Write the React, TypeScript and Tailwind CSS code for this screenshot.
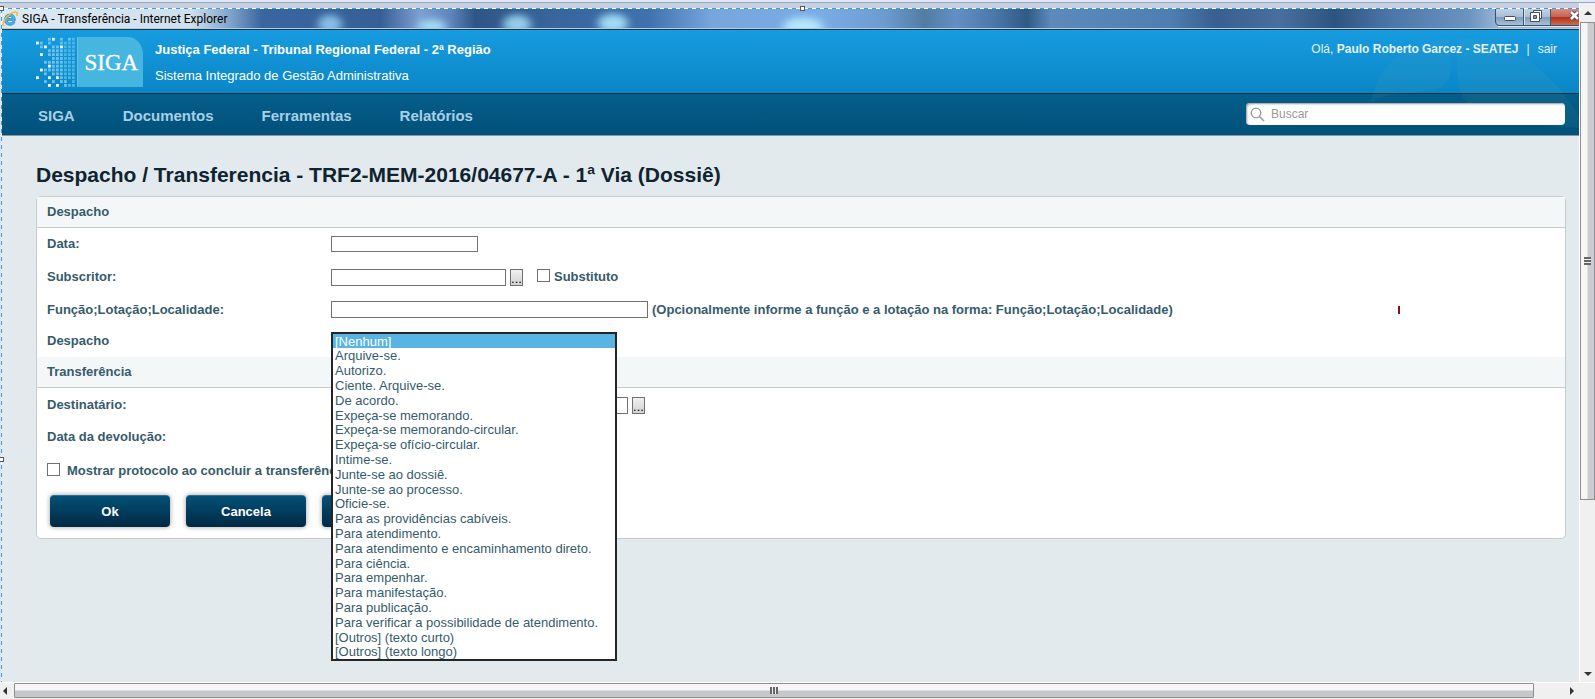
import React from "react";

const DISPATCHES = [
  "[Nenhum]",
  "Arquive-se.",
  "Autorizo.",
  "Ciente. Arquive-se.",
  "De acordo.",
  "Expeça-se memorando.",
  "Expeça-se memorando-circular.",
  "Expeça-se ofício-circular.",
  "Intime-se.",
  "Junte-se ao dossiê.",
  "Junte-se ao processo.",
  "Oficie-se.",
  "Para as providências cabíveis.",
  "Para atendimento.",
  "Para atendimento e encaminhamento direto.",
  "Para ciência.",
  "Para empenhar.",
  "Para manifestação.",
  "Para publicação.",
  "Para verificar a possibilidade de atendimento.",
  "[Outros] (texto curto)",
  "[Outros] (texto longo)",
];

// W = bright dot, L = light dot, o = faint dot
const LOGO_DOTS = [
  "...LW.L.Lo",
  "WL.L..Looo",
  ".LW.LLWooo",
  "...LLLLooo",
  ".W.LLLLooo",
  "....LLLooo",
  "..LLLLLooo",
  "...WLLLooo",
  ".WLLLLLooo",
  "..L.LLLooo",
  "W..W.WLooo",
  "..L.L.LL.o",
  "...W.W.Loo",
];

const DOT_FILL: Record<string, string> = { W: "#ffffff", L: "#6cc2ea", o: "#4db6e3" };

function Logo() {
  return (
    <svg width="107" height="50" viewBox="0 0 107 50" role="img" aria-label="SIGA" className="shrink-0">
      {LOGO_DOTS.flatMap((row, r) =>
        [...row].map((c, i) =>
          c === "." ? null : (
            <rect key={`${r}-${i}`} x={i * 4} y={0.8 + r * 3.85} width="2.8" height="2.8" fill={DOT_FILL[c]} />
          ),
        ),
      )}
      <path d="M41 0H93C101 1 106 7 107 16V50H41Z" fill="#46b5e0" />
      <path d="M41.5 50V.5" stroke="#62c1e6" />
      <text x="48.5" y="33" fill="#fff" stroke="#fff" strokeWidth=".3" fontSize="23" fontFamily="Liberation Serif, serif">
        SIGA
      </text>
    </svg>
  );
}

function Aero() {
  return (
    <svg className="absolute inset-0 h-full w-full" viewBox="0 0 1577 21" preserveAspectRatio="none" aria-hidden="true">
      <defs>
        <linearGradient id="aero">
          <stop offset="0" stopColor="#dde9f2" />
          <stop offset=".12" stopColor="#cfdfec" />
          <stop offset=".145" stopColor="#7fa3cb" />
          <stop offset=".165" stopColor="#3a659f" />
          <stop offset=".24" stopColor="#365f97" />
          <stop offset=".265" stopColor="#7d9fd2" />
          <stop offset=".285" stopColor="#5d84bb" />
          <stop offset=".3" stopColor="#2f5585" />
          <stop offset=".35" stopColor="#37659c" />
          <stop offset=".41" stopColor="#3f71ac" />
          <stop offset=".45" stopColor="#76a6dc" />
          <stop offset=".52" stopColor="#7aace4" />
          <stop offset=".56" stopColor="#6c9bd0" />
          <stop offset=".585" stopColor="#527ca3" />
          <stop offset=".605" stopColor="#6290c4" />
          <stop offset=".63" stopColor="#4a77a8" />
          <stop offset=".65" stopColor="#305a86" />
          <stop offset=".665" stopColor="#5b8abb" />
          <stop offset=".74" stopColor="#4f7fb2" />
          <stop offset=".77" stopColor="#375f8f" />
          <stop offset=".81" stopColor="#48709f" />
          <stop offset=".845" stopColor="#2d5480" />
          <stop offset=".88" stopColor="#4a76a8" />
          <stop offset=".93" stopColor="#6a93c0" />
          <stop offset=".95" stopColor="#9ab8d6" />
          <stop offset="1" stopColor="#9ab8d6" />
        </linearGradient>
        <filter id="soft" x="-50%" y="-50%" width="200%" height="200%">
          <feGaussianBlur stdDeviation="4" />
        </filter>
      </defs>
      <rect width="1577" height="21" fill="url(#aero)" />
      <g filter="url(#soft)" fill="#a4dcf5">
        <ellipse cx="328" cy="16" rx="12" ry="10" fill="#86bfe6" />
        <ellipse cx="430" cy="18" rx="14" ry="7" />
        <ellipse cx="515" cy="16" rx="14" ry="10" fill="#93cdea" />
        <ellipse cx="611" cy="15" rx="15" ry="10" fill="#9fdaf5" />
        <ellipse cx="801" cy="19" rx="20" ry="10" fill="#b4e6ff" />
      </g>
    </svg>
  );
}

function IeIcon() {
  return (
    <svg width="16" height="16" viewBox="0 0 16 16" aria-hidden="true" className="shrink-0">
      <path
        d="M13.3 9.4H5.4C5.6 11 6.6 11.9 8 11.9c1 0 1.7-.4 2.1-1.1h3c-.8 2.2-2.6 3.5-5.1 3.5C4.7 14.3 2.4 12 2.4 8.8 2.4 5.5 4.7 3.1 8 3.1c3.4 0 5.5 2.5 5.3 6.3Z M5.5 7.5h4.9C10.2 6.2 9.3 5.4 8 5.4S5.8 6.2 5.5 7.5Z"
        fill="#4db4ea"
        stroke="#1f7fc4"
        strokeWidth=".7"
        fillRule="evenodd"
      />
      <path d="M2.6 14.6C.6 14.8.4 12.5 2.6 8.8 5.5 4 11.5.3 14.2 1.3c1.3.6 1.2 2 .4 3.6" fill="none" stroke="#f3bb2c" strokeWidth="1.5" />
    </svg>
  );
}

function WindowButtons() {
  return (
    <svg width="84" height="18" viewBox="0 0 84 18" aria-hidden="true" className="relative shrink-0">
      <defs>
        <linearGradient id="wb" x2="0" y2="1">
          <stop offset="0" stopColor="#c3d2e2" />
          <stop offset=".5" stopColor="#a9bfd6" />
          <stop offset=".52" stopColor="#7f9cbc" />
          <stop offset="1" stopColor="#a8c2da" />
        </linearGradient>
        <linearGradient id="wc" x2="0" y2="1">
          <stop offset="0" stopColor="#d88e80" />
          <stop offset=".5" stopColor="#c9604e" />
          <stop offset=".52" stopColor="#b0301c" />
          <stop offset="1" stopColor="#cf6a50" />
        </linearGradient>
      </defs>
      <path d="M1 0V12Q1 16 5 16H84V0Z" fill="url(#wb)" />
      <path d="M56 0H84V16H56Z" fill="url(#wc)" />
      <path d="M.5 0V12Q.5 16.5 5 16.5H84" fill="none" stroke="#3c4f66" />
      <path d="M3 17.5H84" stroke="#dbe8f3" />
      <path d="M28.5 0V16M55.5 0V16" stroke="#45566c" />
      <path d="M29.5 0V16" stroke="#d5e1ec" />
      <rect x="9.5" y="7.500" width="11" height="4" rx="1" fill="#fff" stroke="#464d5c" />
      <path d="M38.5 1.5h8v8h-8z" fill="#fff" stroke="#464d5c" />
      <path d="M35.5 3.5h9v9h-9z" fill="#fff" stroke="#464d5c" />
      <path d="M38.5 6.5h3v3h-3z" fill="#7f9cbc" stroke="#464d5c" />
      <path d="M76 3l7 7M83 3l-7 7" stroke="#464d5c" strokeWidth="4.5" />
      <path d="M76 3l7 7M83 3l-7 7" stroke="#fff" strokeWidth="2.5" />
    </svg>
  );
}

function Handle({ className }: { className: string }) {
  return <span className={`absolute z-10 h-[5px] w-[5px] border border-[#555] bg-white ${className}`} />;
}

const INPUT = "border border-[#707070] bg-white px-1 text-[13px] outline-none";
const BOX = "h-[13px] w-[13px] shrink-0 appearance-none border border-[#707070] bg-white";

function Row({ id, label, children, className }: { id: string; label: string; children: React.ReactNode; className: string }) {
  return (
    <div className={`flex items-center px-[10px] ${className}`}>
      <label htmlFor={id} className="w-[284px] shrink-0">
        {label}
      </label>
      {children}
    </div>
  );
}

function SectionTitle({ children }: { children: React.ReactNode }) {
  return <h2 className="flex h-[31px] items-center border-b border-[#c8cbcd] bg-[#f3f7f8] px-[10px]">{children}</h2>;
}

function Picker({ label }: { label: string }) {
  return (
    <button
      type="button"
      aria-label={label}
      className="ml-1 flex h-[17px] w-[13px] shrink-0 items-end justify-center overflow-hidden border border-[#707070] bg-linear-to-b from-[#f0f0f0] to-[#d2d2d2] text-[13px] leading-[13px] font-normal text-black"
    >
      ...
    </button>
  );
}

function ActionButton({ children }: { children: React.ReactNode }) {
  return (
    <button
      type="button"
      className="h-8 w-[120px] shrink-0 rounded-[4px] border-t border-[#2d6d8f] bg-linear-to-b from-[#035078] to-[#012a43] text-[13px] font-bold text-white shadow-[0_0_4px_1px_#bbb]"
    >
      {children}
    </button>
  );
}

function Arrow({ d }: { d: string }) {
  return (
    <svg width="8" height="8" viewBox="0 0 8 8" aria-hidden="true">
      <path d={d} fill="#333" />
    </svg>
  );
}

export default function App() {
  return (
    <div className="flex min-h-screen flex-col bg-[#f0f0f0] font-['Liberation_Sans',Arial,sans-serif] text-[13px] leading-4 text-[#365b6d]">
      <div className="h-[3px] border-b border-[#93a9c1] bg-[#dfe9f5]" />
      <div className="flex flex-1">
        <div className="flex min-w-0 flex-1 flex-col">
          <div className="h-[5px] bg-[#c8d0df]" />
          <div className="relative h-px bg-[repeating-linear-gradient(90deg,#3b98f5_0_4px,#fff_4px_8px)]">
            <Handle className="-top-[2px] -left-px" />
            <Handle className="-top-[2px] left-[800px]" />
          </div>
          <div className="relative flex flex-1">
            <div className="w-px bg-[#dde3ea]" />
            <div className="w-px bg-[repeating-linear-gradient(180deg,#3b98f5_0_4px,#fff_4px_8px)]" />
            <Handle className="top-[448px] -left-px" />
            <div className="flex min-w-0 flex-1 flex-col bg-[#e2eaed]">
              <div className="relative flex h-[21px] items-start justify-between overflow-hidden border-b border-[#18384f]">
                <Aero />
                <div className="relative flex items-center gap-1 pt-[2px] font-[Roboto,sans-serif] text-[12px] leading-4 text-black">
                  <IeIcon />
                  <span>SIGA - Transferência - Internet Explorer</span>
                </div>
                <WindowButtons />
                <div className="absolute inset-x-0 bottom-0 h-px bg-[#b9cbda]" />
              </div>

              <header className="relative text-white">
                <div className="flex h-16 justify-between border-b border-[#222e37] bg-linear-to-b from-[#179ce0] to-[#0986c6] pr-[22px] pl-[34px]">
                  <div className="flex items-center gap-3">
                    <Logo />
                    <div className="pt-[2px]">
                      <p className="font-bold leading-[26px]">Justiça Federal - Tribunal Regional Federal - 2ª Região</p>
                      <p className="leading-[26px]">Sistema Integrado de Gestão Administrativa</p>
                    </div>
                  </div>
                  <p className="relative z-10 flex h-[38px] items-center text-[12px] text-[#e4f1f8]">
                    Olá,&nbsp;<strong>Paulo Roberto Garcez - SEATEJ</strong>
                    <span className="mx-2">|</span>
                    <a href="#sair">sair</a>
                  </p>
                </div>
                <nav className="flex h-[42px] items-center justify-between border-b border-[#8a979f] bg-linear-to-b from-[#055e8a] to-[#01517b] pr-[14px] pl-9 text-[15px] font-bold text-[#a8cfe3]">
                  <div className="flex items-center gap-12 pt-[2px]">
                    <a href="#siga">SIGA</a>
                    <a href="#documentos">Documentos</a>
                    <a href="#ferramentas">Ferramentas</a>
                    <a href="#relatorios">Relatórios</a>
                  </div>
                  <label className="relative z-10 mb-px flex h-[22px] w-[319px] items-center gap-[6px] rounded-[4px] bg-white px-1 shadow-[inset_1px_1px_2px_#999]">
                    <svg width="15" height="15" viewBox="0 0 15 15" fill="none" stroke="#999" aria-hidden="true">
                      <circle cx="6" cy="6" r="4.8" strokeWidth="1.3" />
                      <path d="M9.5 9.5L14 14" strokeWidth="1.5" />
                    </svg>
                    <input
                      type="search"
                      aria-label="Buscar"
                      placeholder="Buscar"
                      className="min-w-0 flex-1 bg-transparent text-[12px] font-normal text-[#333] outline-none placeholder:text-[#999]"
                    />
                  </label>
                </nav>
                <svg className="absolute top-2 right-0" width="208" height="96" viewBox="0 0 208 96" fill="#8fb8b0" fillOpacity=".07" aria-hidden="true">
                  <path d="M0 64C5 32 30 5 77 1C81 18 83 42 72 48C55 58 20 50 2 64Z" />
                  <path d="M89 1C130 -3 180 30 208 78V90C165 88 120 74 95 64C84 50 84 20 89 1Z" />
                </svg>
              </header>

              <main className="flex-1 pt-[26px] pr-[13px] pb-8 pl-[34px]">
                <h1 className="text-[21px] leading-[26px] font-bold text-[#0f2330]">
                  Despacho / Transferencia - TRF2-MEM-2016/04677-A - 1ª Via (Dossiê)
                </h1>
                <form className="mt-2 rounded-[5px] border border-[#c8cbcd] bg-white font-bold">
                  <SectionTitle>Despacho</SectionTitle>
                  <Row id="data" label="Data:" className="h-8">
                    <input id="data" className={`h-4 w-[147px] ${INPUT}`} />
                  </Row>
                  <Row id="subscritor" label="Subscritor:" className="h-[34px]">
                    <input id="subscritor" className={`h-[17px] w-[175px] ${INPUT}`} />
                    <Picker label="Buscar subscritor" />
                    <input id="substituto" type="checkbox" className={`mr-1 mb-1 ml-[14px] ${BOX}`} />
                    <label htmlFor="substituto">Substituto</label>
                  </Row>
                  <Row id="funcao" label="Função;Lotação;Localidade:" className="h-[31px]">
                    <input id="funcao" className={`mr-1 h-[17px] w-[317px] ${INPUT}`} />
                    <span>(Opcionalmente informe a função e a lotação na forma: Função;Lotação;Localidade)</span>
                    <span className="mr-[155px] ml-auto h-2 w-[2px] bg-[#8e1010]" />
                  </Row>
                  <Row id="despacho" label="Despacho" className="h-8">
                    <div className="relative h-[18px] w-[286px]">
                      <select
                        id="despacho"
                        size={22}
                        defaultValue="[Nenhum]"
                        className="absolute top-0 left-0 z-20 h-[329px] w-[286px] overflow-hidden border-2 border-[#222628] bg-white text-[13px] font-normal outline-none"
                      >
                        {DISPATCHES.map((name) => (
                          <option
                            key={name}
                            value={name}
                            className="block h-[15px] min-h-0 px-[2px] py-0 leading-[15px] text-[#365b6d] [-webkit-text-fill-color:#365b6d] checked:bg-linear-to-r checked:from-[#5ab4e3] checked:to-[#5ab4e3] checked:[-webkit-text-fill-color:#fff] nth-[5n+1]:h-[14px]"
                          >
                            {name}
                          </option>
                        ))}
                      </select>
                    </div>
                  </Row>
                  <SectionTitle>Transferência</SectionTitle>
                  <Row id="destinatario" label="Destinatário:" className="h-[34px]">
                    <input id="destinatario" className={`h-[17px] w-[297px] ${INPUT}`} />
                    <Picker label="Buscar destinatário" />
                  </Row>
                  <Row id="devolucao" label="Data da devolução:" className="h-[30px]">
                    <input id="devolucao" className={`h-4 w-[147px] ${INPUT}`} />
                  </Row>
                  <div className="flex h-[38px] items-center gap-[7px] px-[10px]">
                    <input id="protocolo" type="checkbox" className={`mb-1 ${BOX}`} />
                    <label htmlFor="protocolo">Mostrar protocolo ao concluir a transferência</label>
                  </div>
                  <div className="flex gap-4 px-[13px] pt-[5px] pb-[11px]">
                    <ActionButton>Ok</ActionButton>
                    <ActionButton>Cancela</ActionButton>
                    <ActionButton>Visualizar</ActionButton>
                  </div>
                </form>
              </main>
            </div>
          </div>
        </div>
        <div className="flex w-4 shrink-0 flex-col items-center border-l border-white bg-[#f0f0f0]">
          <div className="flex h-[19px] items-center">
            <Arrow d="M0 6L4 2L8 6Z" />
          </div>
          <div className="flex w-full flex-[478] items-center justify-center border border-[#8e8e8e] bg-linear-to-r from-[#f6f6f6] from-45% to-[#cbcbd0] to-55%">
            <div className="h-2 w-[7px] bg-[repeating-linear-gradient(180deg,#666_0_2px,#eee_2px_3px)]" />
          </div>
          <div className="flex-[167]" />
          <div className="flex h-4 items-center">
            <Arrow d="M0 2H8L4 6Z" />
          </div>
        </div>
      </div>
      <div className="flex h-[17px] items-stretch border-t border-white pr-4 pb-px">
        <div className="flex w-[14px] items-center justify-center pr-1">
          <Arrow d="M6 0V8L2 4Z" />
        </div>
        <div className="flex flex-[1520] items-center justify-center rounded-[1px] border border-[#8e8e8e] bg-linear-to-b from-[#f6f6f6] from-45% to-[#c6c7ca] to-55%">
          <div className="h-[7px] w-2 bg-[repeating-linear-gradient(90deg,#666_0_2px,#eee_2px_3px)]" />
        </div>
        <div className="flex-[30]" />
        <div className="flex w-[15px] items-center justify-center">
          <Arrow d="M2 0V8L6 4Z" />
        </div>
      </div>
    </div>
  );
}
